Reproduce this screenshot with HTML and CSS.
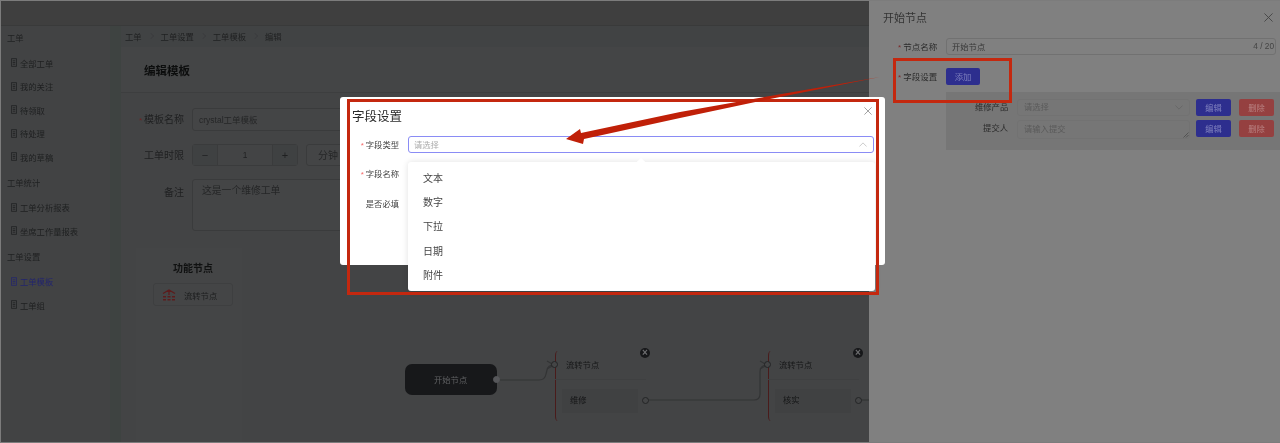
FILE: index.html
```html
<!DOCTYPE html>
<html lang="zh-CN">
<head>
<meta charset="utf-8">
<title>编辑模板</title>
<link rel="stylesheet" href="styles.css">
</head>
<body>
<div class="app">
  <svg width="0" height="0" class="defs">
    <symbol id="doc" viewBox="0 0 7 10"><path d="M.5.5h6v9h-6zM2 3h3M2 5h3M2 7h3" fill="none" stroke="currentColor" stroke-width=".9"/></symbol>
  </svg>
  <header class="topbar"></header>
  <div class="body">
    <aside class="sidebar">
      <section class="group">
        <h4 class="group-title">工单</h4>
        <a class="item"><svg class="doc"><use href="#doc"/></svg>全部工单</a>
        <a class="item"><svg class="doc"><use href="#doc"/></svg>我的关注</a>
        <a class="item"><svg class="doc"><use href="#doc"/></svg>待领取</a>
        <a class="item"><svg class="doc"><use href="#doc"/></svg>待处理</a>
        <a class="item"><svg class="doc"><use href="#doc"/></svg>我的草稿</a>
      </section>
      <section class="group">
        <h4 class="group-title">工单统计</h4>
        <a class="item"><svg class="doc"><use href="#doc"/></svg>工单分析报表</a>
        <a class="item"><svg class="doc"><use href="#doc"/></svg>坐席工作量报表</a>
      </section>
      <section class="group">
        <h4 class="group-title">工单设置</h4>
        <a class="item active"><svg class="doc"><use href="#doc"/></svg>工单模板</a>
        <a class="item"><svg class="doc"><use href="#doc"/></svg>工单组</a>
      </section>
    </aside>
    <main class="main">
      <nav class="crumbs"><span>工单</span><i class="sep"></i><span>工单设置</span><i class="sep"></i><span>工单模板</span><i class="sep"></i><span>编辑</span></nav>
      <div class="page-head"><h2>编辑模板</h2></div>
      <div class="page-body">
        <form class="tpl-form">
          <div class="tpl-row">
            <label class="tpl-label"><b class="star">*</b>模板名称</label>
            <div class="tpl-input h23">crystal工单模板</div>
          </div>
          <div class="tpl-row">
            <label class="tpl-label">工单时限</label>
            <div class="stepper"><span class="step">−</span><span class="step-val">1</span><span class="step">+</span></div>
            <div class="tpl-input unit">分钟</div>
          </div>
          <div class="tpl-row">
            <label class="tpl-label top">备注</label>
            <div class="tpl-input area">这是一个维修工单</div>
          </div>
        </form>
        <div class="designer">
          <aside class="palette">
            <h5>功能节点</h5>
            <div class="pal-item">
              <svg width="14" height="13" viewBox="0 0 14 13"><path d="M1 5.500 7 2l6 3.500M7 2v5" fill="none" stroke="#5c1c1c" stroke-width="1.200"/><path d="M1 8h3v1.500H1zM5.500 8h3v1.500h-3zM10 8h3v1.500h-3zM1 11h3v1.500H1zM5.500 11h3v1.500h-3zM10 11h3v1.500h-3z" fill="#5c1c1c"/></svg>
              <span>流转节点</span>
            </div>
          </aside>
          <div class="canvas">
            <svg class="wires" width="640" height="195" viewBox="242 248 640 195">
              <path d="M497 380h42q6 0 7-6l1-4q1-5 7-5" fill="none" stroke="#333435" stroke-width="1.200"/>
              <path d="M646 400h108q6 0 6-6v-22q0-7 7-7" fill="none" stroke="#333435" stroke-width="1.200"/>
              <path d="M859 400h12" fill="none" stroke="#333435" stroke-width="1.200"/>
              <path d="M547 361l7 4-7 4M760 361l7 4-7 4" fill="none" stroke="#333435" stroke-width="1.200"/>
            </svg>
            <div class="start-node">开始节点<i class="port start-port"></i></div>
            <article class="flow-node n1">
              <div class="fn-title">流转节点<i class="port in-port"></i></div>
              <div class="fn-block">维修<i class="port out-port"></i></div>
              <span class="fn-close">×</span>
            </article>
            <article class="flow-node n2">
              <div class="fn-title">流转节点<i class="port in-port"></i></div>
              <div class="fn-block">核实<i class="port out-port"></i></div>
              <span class="fn-close">×</span>
            </article>
          </div>
        </div>
      </div>
    </main>
  </div>

  <aside class="drawer">
    <div class="drawer-head"><h3>开始节点</h3>
      <svg class="x dx" viewBox="0 0 10 10"><path d="M.5.5l9 9M9.500.5l-9 9"/></svg>
    </div>
    <div class="d-row">
      <label class="d-label"><b class="star dim">*</b>节点名称</label>
      <div class="d-input">开始节点<span class="count">4 / 20</span></div>
    </div>
    <div class="d-row add-row">
      <label class="d-label"><b class="star dim">*</b>字段设置</label>
      <span class="btn blue add">添加</span>
    </div>
    <div class="fields">
      <div class="f-row">
        <label class="f-label">维修产品</label>
        <div class="f-input">请选择<svg class="chev" viewBox="0 0 10 6"><path d="M.5.5 5 5 9.500.5"/></svg></div>
        <span class="btn blue">编辑</span><span class="btn red">删除</span>
      </div>
      <div class="f-row second">
        <label class="f-label">提交人</label>
        <div class="f-input tall">请输入提交<svg class="grip" viewBox="0 0 6 6"><path d="M.5 5.500l5-5M3 5.500l2.500-2.500"/></svg></div>
        <span class="btn blue">编辑</span><span class="btn red">删除</span>
      </div>
    </div>
  </aside>

  <div class="modal">
    <h3 class="modal-title">字段设置</h3>
    <svg class="x mx" viewBox="0 0 10 10"><path d="M.5.5l9 9M9.500.5l-9 9"/></svg>
    <div class="m-row first">
      <label class="m-label"><b class="star">*</b>字段类型</label>
      <div class="m-select">请选择<svg class="chev up" viewBox="0 0 10 6"><path d="M.5 5.500 5 1l4.500 4.500"/></svg></div>
    </div>
    <div class="m-row"><label class="m-label"><b class="star">*</b>字段名称</label></div>
    <div class="m-row"><label class="m-label">是否必填</label></div>
  </div>
  <ul class="popup">
    <li>文本</li><li>数字</li><li>下拉</li><li>日期</li><li>附件</li>
  </ul>

  <div class="mark mark-modal"></div>
  <div class="mark mark-add"></div>
  <svg class="arrow" width="1280" height="443" viewBox="0 0 1280 443"><polygon points="566,139 580,129 581,133 680,112 770,96 880,77 770,99 680,118 584,139 583,144"/></svg>
  <div class="frame"></div>
</div>
</body>
</html>
```
FILE: styles.css
```css
* { box-sizing: border-box; }
html, body { margin: 0; height: 100%; background: #414243; }
body { font-family: "Liberation Sans", "Noto Sans CJK SC", sans-serif; overflow: hidden; }
h2, h3, h4, h5, ul { margin: 0; padding: 0; }
.defs { position: absolute; }
.app { position: relative; width: 1280px; height: 443px; overflow: hidden; background: #414243; color: #1f2021; filter: blur(.35px); }
.frame { position: absolute; inset: 0; border: 1px solid #7c7c7c; border-right: 0; pointer-events: none; }

.topbar { height: 26px; background: #3f3f3f; border-bottom: 1px solid #393a3a; }
.body { display: flex; height: 417px; }

.sidebar { width: 110px; flex: none; background: #424344; font-size: 8.300px; padding-left: 7px; }
.group { margin-bottom: 1px; }
.group-title { height: 26px; line-height: 25px; font-size: 8.300px; font-weight: 400; color: #1f2021; }
.item { display: flex; align-items: center; height: 23.500px; padding: 0 0 2px 4px; gap: 3px; color: #1e1f20; }
.item.active { color: #22246e; }
.doc { width: 6px; height: 9px; flex: none; color: currentColor; }

.main { flex: 1; min-width: 0; margin-left: 11px; background: #434445; box-shadow: -11px 0 0 #3e4341; }
.crumbs { height: 21px; display: flex; align-items: center; padding: 0 0 1px 4px; font-size: 8.300px; color: #1f2021; background: #414344; }
.sep { width: 6px; height: 6px; border-top: 1px solid #3a3b3c; border-right: 1px solid #3a3b3c; transform: scale(.7) rotate(45deg); margin: 0 7px 0 6px; flex: none; }
.page-head { height: 46px; padding-left: 23px; display: flex; align-items: center; border-bottom: 1px solid #3d3e3f; background: #444546; }
.page-head h2 { font-size: 11.500px; font-weight: 700; color: #0c0d0d; }
.page-body { padding: 15px 0 0 15px; background: #434445; height: 350px; }

.tpl-form { display: flex; flex-direction: column; gap: 13px; padding-right: 20px; }
.tpl-row { display: flex; gap: 8px; align-items: center; }
.tpl-label { width: 48px; flex: none; text-align: right; font-size: 10px; color: #1f2021; position: relative; padding-bottom: 2px; }
.tpl-label.top { align-self: flex-start; padding-top: 5px; }
.star { color: #6c2424; font-weight: 400; margin-right: 2px; font-size: 8px; }
.tpl-input { flex: 1; border: 1px solid #3a3b3c; border-radius: 3px; font-size: 8.500px; color: #252627; padding: 0 6px 2px; display: flex; align-items: center; background: #444546; }
.h23 { height: 23px; }
.unit { height: 22px; flex: 1; font-size: 10px; padding-left: 11px; }
.area { height: 52px; align-items: flex-start; padding: 3px 9px; font-size: 9.800px; }
.stepper { display: flex; width: 106px; height: 22px; border: 1px solid #3a3b3c; border-radius: 3px; flex: none; text-align: center; font-size: 11px; line-height: 20px; }
.step { width: 24px; background: #3f4142; flex: none; }
.step-val { flex: 1; font-size: 8.300px; border-left: 1px solid #3a3b3c; border-right: 1px solid #3a3b3c; }

.designer { display: flex; margin-top: 17px; height: 195px; }
.palette { width: 106px; flex: none; background: #444546; padding: 14px 9px 0 17px; display: flex; flex-direction: column; }
.palette h5 { font-size: 10px; font-weight: 700; text-align: center; color: #101111; line-height: 14px; margin: 0 0 7px -8px; width: 96px; }
.pal-item { width: 80px; height: 23px; border: 1px solid #3e3f40; border-radius: 3px; display: flex; align-items: center; gap: 8px; padding-left: 8px; font-size: 8.300px; color: #1c1d1e; }

.canvas { position: relative; flex: 1; }
.wires { position: absolute; left: 0; top: 0; }
.start-node { position: absolute; left: 163px; top: 116px; width: 92px; height: 31px; border-radius: 7px; background: #17181a; color: #5f6062; font-size: 8.300px; display: flex; align-items: center; padding: 0 0 2px 29px; }
.port { position: absolute; width: 7px; height: 7px; border-radius: 50%; border: 1px solid #242526; background: #444546; }
.start-port { right: -3px; top: 12px; background: #56575a; border-color: #56575a; }
.flow-node { position: absolute; top: 102px; width: 91px; height: 72px; font-size: 8.300px; background: #434445; }
.flow-node::before { content: ""; position: absolute; left: 0; top: 1px; bottom: 1px; width: 5px; border-left: 1.500px solid #4a1b1b; border-radius: 5px / 8px; }
.n1 { left: 313px; }
.n2 { left: 526px; }
.fn-title { height: 30px; padding: 11px 0 0 11px; line-height: 8px; border-bottom: 1px solid #3f4041; position: relative; color: #161718; }
.in-port { left: -4px; top: 11px; }
.fn-block { position: absolute; left: 7px; top: 39px; width: 76px; height: 24px; padding-left: 8px; line-height: 23px; background: #404142; color: #141516; }
.out-port { right: -11px; top: 8px; }
.fn-close { position: absolute; right: -4px; top: -2px; width: 10px; height: 10px; border-radius: 50%; background: #17181a; color: #6d6e70; font-size: 10px; line-height: 10px; font-weight: 700; text-align: center; }

.drawer { position: absolute; top: 0; right: 0; bottom: 0; width: 411px; background: #808080; padding: 1px 0 0 14px; color: #333; }
.drawer-head { height: 32px; display: flex; justify-content: space-between; align-items: center; padding-right: 7px; }
.drawer-head h3 { font-size: 11px; font-weight: 400; color: #333; }
.x { fill: none; stroke: #444; stroke-width: 1; }
.dx { width: 9px; height: 9px; }
.d-row { display: flex; align-items: center; gap: 8px; padding-left: 15px; height: 17px; margin-top: 5px; margin-right: 4px; font-size: 8.500px; }
.d-row.add-row { margin-top: 13px; }
.d-label { width: 40px; flex: none; white-space: nowrap; color: #2b2b2b; padding-bottom: 2px; }
.star.dim { color: #7c2b2b; }
.d-input { flex: 1; height: 17px; border: 1px solid #717171; border-radius: 3px; display: flex; justify-content: space-between; align-items: center; padding: 0 1px 2px 5px; color: #363636; font-size: 8.300px; }
.count { color: #444; }
.btn { height: 17px; border-radius: 2px; font-size: 8.300px; display: flex; align-items: center; justify-content: center; flex: none; width: 35px; padding-bottom: 2px; }
.btn.add { width: 34px; }
.blue { background: #2d2e8e; color: #7f80be; }
.red { background: #954040; color: #b98282; margin-left: 8px; }
.fields { margin: 7px 0 0 63px; height: 58px; background: #767676; padding: 7px 0 0 29px; font-size: 8.300px; }
.f-row { display: flex; align-items: flex-start; }
.f-row.second { margin-top: 4px; }
.f-label { width: 33px; text-align: right; margin-right: 9px; line-height: 16px; color: #2b2b2b; white-space: nowrap; flex: none; }
.f-input { width: 173px; height: 17px; border: 1px solid #727272; border-radius: 3px; margin-right: 6px; padding: 0 6px; line-height: 14px; color: #5a5a5a; position: relative; flex: none; }
.f-input.tall { height: 19px; line-height: 16px; }
.chev { position: absolute; right: 6px; top: 5px; width: 8px; height: 5px; fill: none; stroke: #656565; stroke-width: 1; }
.grip { position: absolute; right: 0; bottom: 0; width: 6px; height: 6px; fill: none; stroke: #4a4a4a; stroke-width: .8; }

.modal { position: absolute; left: 340px; top: 97px; width: 545px; height: 168px; background: #fff; border-radius: 3px; padding: 11px 0 0 12px; }
.modal-title { font-size: 12.500px; font-weight: 400; line-height: 18px; color: #2a2a2a; }
.mx { position: absolute; right: 13px; top: 10px; width: 8px; height: 8px; stroke: #8c8c8c; }
.m-row { display: flex; align-items: center; height: 17px; margin-top: 12.500px; gap: 9px; }
.m-row.first { margin-top: 10px; }
.m-label { width: 47px; flex: none; text-align: right; font-size: 8.300px; color: #444; white-space: nowrap; padding-bottom: 2px; }
.m-label .star { color: #f56c6c; }
.m-select { position: relative; width: 466px; height: 17px; border: 1px solid #8a8cf5; border-radius: 3px; padding: 0 5px; font-size: 8.300px; line-height: 16px; color: #aaa; }
.chev.up { stroke: #c0c0c0; right: 6px; top: 5px; }

.popup { position: absolute; left: 408px; top: 162px; width: 467px; height: 129px; background: #fff; border-radius: 3px; list-style: none; padding: 5px 0 3px; box-shadow: 0 0 6px rgba(0,0,0,.12); }
.popup::before { content: ""; position: absolute; left: 230px; top: -3px; width: 6px; height: 6px; background: #fff; transform: rotate(45deg); }
.popup li { height: 24.200px; line-height: 24.200px; padding-left: 15px; font-size: 10px; color: #444; }

.mark { position: absolute; border: 3px solid #c4280f; }
.mark-modal { left: 347px; top: 99px; width: 532px; height: 196px; }
.mark-add { left: 893px; top: 58px; width: 119px; height: 45px; }
.arrow { position: absolute; left: 0; top: 0; fill: #c02008; pointer-events: none; }
```
